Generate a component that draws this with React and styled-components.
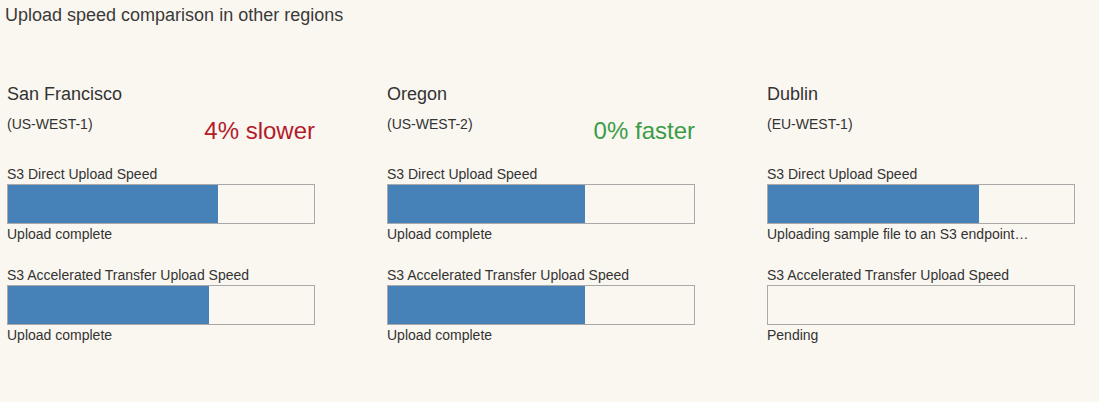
import React from "react";
import styled, { createGlobalStyle } from "styled-components";

const Global = createGlobalStyle`
  html, body { margin: 0; padding: 0; background: #faf7f0; }
  body { font-family: "Liberation Sans", Arial, sans-serif; color: #333; }
`;

const Page = styled.div`
  padding: 5px 0 0 5px;
  min-height: 397px;
`;

const Title = styled.h1`
  margin: 0;
  font-size: 18px;
  line-height: 20px;
  font-weight: normal;
  color: #3a3a3a;
`;

const Columns = styled.div`
  display: grid;
  grid-template-columns: repeat(3, 309px);
  column-gap: 71px;
  margin-top: 59px;
  padding-left: 2px;
`;

const Column = styled.section`
  display: flex;
  flex-direction: column;
`;

const Name = styled.h2`
  margin: 0;
  font-size: 18px;
  line-height: 20px;
  font-weight: normal;
`;

const HeadRow = styled.div`
  display: flex;
  justify-content: space-between;
  align-items: flex-start;
  margin-top: 12px;
  height: 29px;
`;

const Region = styled.div`
  font-size: 14px;
  line-height: 16px;
`;

const Delta = styled.div`
  font-size: 24px;
  line-height: 28px;
  margin-top: 1px;
  padding-right: 1px;
  color: ${(p) => (p.$tone === "slower" ? "#b31b2b" : "#3b9c48")};
`;

const Metric = styled.div`
  display: flex;
  flex-direction: column;
  margin-top: ${(p) => (p.$first ? "21px" : "25px")};
`;

const Label = styled.div`
  font-size: 14px;
  line-height: 16px;
`;

const Bar = styled.div`
  margin-top: 2px;
  height: 38px;
  width: 306px;
  border: 1px solid #a9a9a9;
  background: #faf7f0;
`;

const Fill = styled.div`
  height: 100%;
  background: #4682b8;
`;

const Status = styled.div`
  margin-top: 2px;
  font-size: 14px;
  line-height: 16px;
`;

const data = [
  {
    name: "San Francisco",
    region: "(US-WEST-1)",
    delta: "4% slower",
    tone: "slower",
    metrics: [
      { label: "S3 Direct Upload Speed", fill: 210, status: "Upload complete" },
      { label: "S3 Accelerated Transfer Upload Speed", fill: 201, status: "Upload complete" },
    ],
  },
  {
    name: "Oregon",
    region: "(US-WEST-2)",
    delta: "0% faster",
    tone: "faster",
    metrics: [
      { label: "S3 Direct Upload Speed", fill: 197, status: "Upload complete" },
      { label: "S3 Accelerated Transfer Upload Speed", fill: 197, status: "Upload complete" },
    ],
  },
  {
    name: "Dublin",
    region: "(EU-WEST-1)",
    delta: null,
    metrics: [
      { label: "S3 Direct Upload Speed", fill: 211, status: "Uploading sample file to an S3 endpoint…" },
      { label: "S3 Accelerated Transfer Upload Speed", fill: 0, status: "Pending" },
    ],
  },
];

export default function App() {
  return (
    <Page>
      <Global />
      <Title>Upload speed comparison in other regions</Title>
      <Columns>
        {data.map((c) => (
          <Column key={c.name}>
            <Name>{c.name}</Name>
            <HeadRow>
              <Region>{c.region}</Region>
              {c.delta && <Delta $tone={c.tone}>{c.delta}</Delta>}
            </HeadRow>
            {c.metrics.map((m, i) => (
              <Metric key={m.label} $first={i === 0}>
                <Label>{m.label}</Label>
                <Bar>
                  <Fill style={{ width: `${m.fill}px` }} />
                </Bar>
                <Status>{m.status}</Status>
              </Metric>
            ))}
          </Column>
        ))}
      </Columns>
    </Page>
  );
}
